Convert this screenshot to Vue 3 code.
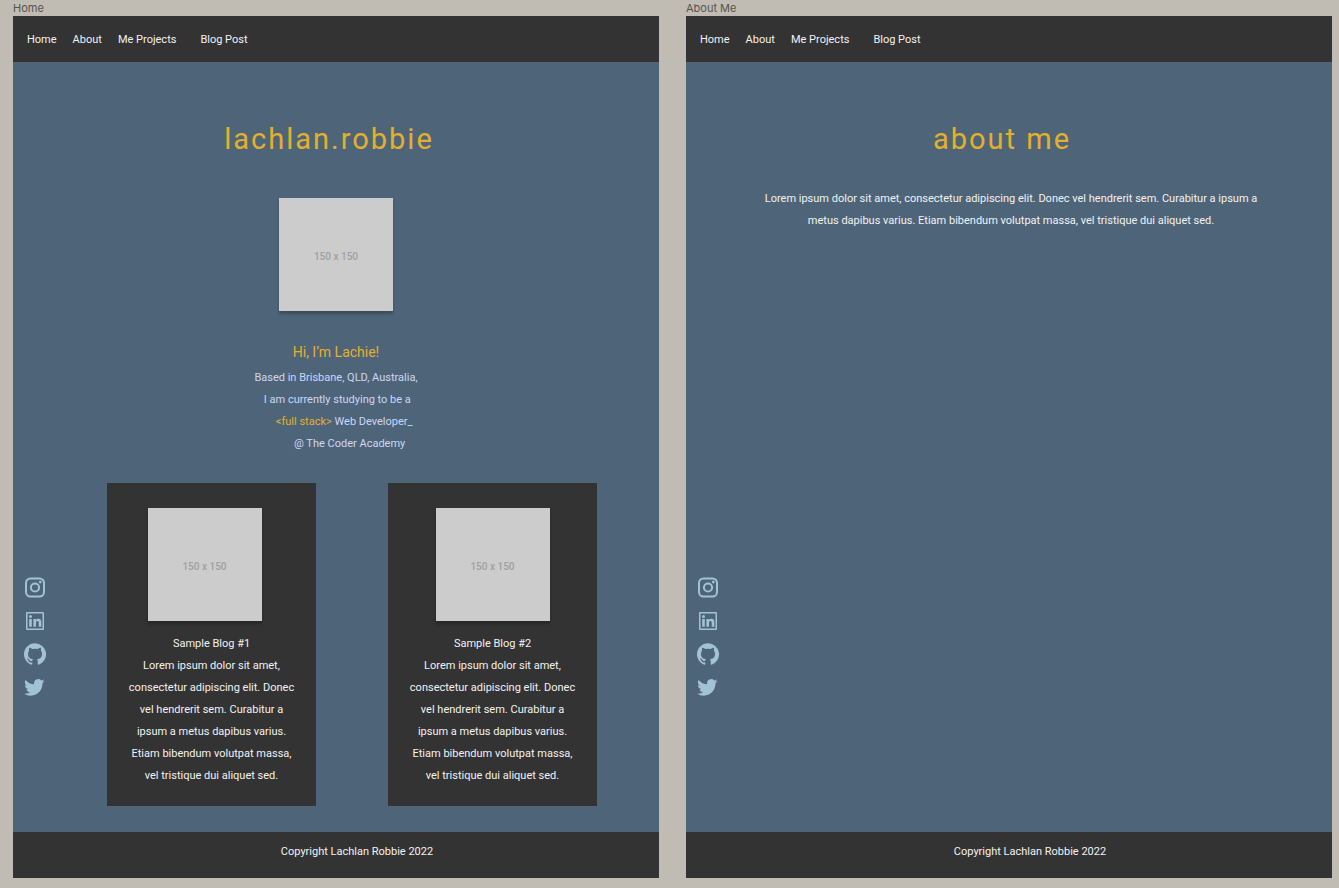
<script setup>
const navLinks = ['Home', 'About', 'Me Projects', 'Blog Post']

const lorem =
  'Lorem ipsum dolor sit amet, consectetur adipiscing elit. Donec vel hendrerit sem. Curabitur a ipsum a metus dapibus varius. Etiam bibendum volutpat massa, vel tristique dui aliquet sed.'

const boards = [
  { id: 'home', label: 'Home', title: 'lachlan.robbie' },
  { id: 'about', label: 'About Me', title: 'about me' },
]

const posts = [
  { title: 'Sample Blog #1', shifted: true },
  { title: 'Sample Blog #2', shifted: false },
]

const socials = [
  {
    name: 'Instagram',
    path: 'M7.500 1.500h9A5.500 5.500 0 0 1 22 7v9a5.500 5.500 0 0 1-5.500 5.500h-9A5.500 5.500 0 0 1 2 16v-9A5.500 5.500 0 0 1 7.500 1.500zm0 2a3.500 3.500 0 0 0-3.500 3.500v9a3.500 3.500 0 0 0 3.500 3.500h9a3.500 3.500 0 0 0 3.500-3.500v-9a3.500 3.500 0 0 0-3.500-3.500zM12 6.400a5.100 5.100 0 1 1 0 10.200a5.100 5.100 0 0 1 0-10.200zm0 2a3.100 3.100 0 1 0 0 6.200a3.100 3.100 0 0 0 0-6.200zM17.300 4.700a1.400 1.400 0 1 1 0 2.800a1.400 1.400 0 0 1 0-2.800z',
  },
  {
    name: 'LinkedIn',
    path: 'M4 3h16a1 1 0 0 1 1 1v16a1 1 0 0 1-1 1H4a1 1 0 0 1-1-1V4a1 1 0 0 1 1-1zm.500 1.500v15h15v-15zM6.200 10h2.600v7.800H6.200zM7.500 5.900a1.500 1.500 0 1 1 0 3a1.500 1.500 0 0 1 0-3zM10.400 10h2.500v1.100c.500-.800 1.400-1.300 2.500-1.300c2.200 0 2.900 1.400 2.900 3.600v4.400h-2.600v-4c0-1-.200-1.800-1.300-1.800s-1.400.800-1.400 1.800v4h-2.600z',
  },
  {
    name: 'GitHub',
    path: 'M12 1.300C5.920 1.300 1 6.220 1 12.300c0 4.870 3.150 8.980 7.520 10.440c.550.100.750-.240.750-.530v-1.860c-3.060.670-3.710-1.470-3.710-1.470c-.500-1.270-1.220-1.610-1.220-1.610c-1-.680.080-.670.080-.670c1.100.080 1.690 1.140 1.690 1.140c.980 1.680 2.570 1.190 3.200.910c.100-.710.380-1.190.700-1.470c-2.440-.280-5.010-1.220-5.010-5.440c0-1.200.430-2.180 1.130-2.950c-.110-.280-.490-1.400.110-2.910c0 0 .920-.290 3.020 1.130a10.500 10.500 0 0 1 5.500 0c2.100-1.420 3.020-1.130 3.020-1.130c.600 1.510.220 2.630.110 2.910c.700.770 1.130 1.750 1.130 2.950c0 4.230-2.570 5.160-5.020 5.430c.390.340.740 1.010.740 2.040v3.020c0 .290.200.640.750.530A11 11 0 0 0 12 1.300z',
  },
  {
    name: 'Twitter',
    path: 'M21.540 6.100c-.750.330-1.550.560-2.400.660a4.180 4.180 0 0 0 1.840-2.310c-.810.480-1.700.820-2.650 1.010a4.170 4.170 0 0 0-7.110 3.800A11.850 11.850 0 0 1 2.600 4.900a4.170 4.170 0 0 0 1.300 5.570a4.140 4.140 0 0 1-1.900-.520v.050a4.180 4.180 0 0 0 3.350 4.100a4.200 4.200 0 0 1-1.890.070a4.180 4.180 0 0 0 3.900 2.900A8.380 8.380 0 0 1 1.200 18.800a11.820 11.820 0 0 0 6.400 1.870c7.680 0 11.880-6.360 11.880-11.870l-.010-.540c.820-.590 1.520-1.320 2.070-2.160z',
  },
]
</script>

<template>
  <div class="canvas">
    <section v-for="board in boards" :key="board.id" class="frame">
      <div class="frame-label">{{ board.label }}</div>
      <div class="board">
        <header class="bar">
          <nav class="nav">
            <a v-for="link in navLinks" :key="link" href="#">{{ link }}</a>
          </nav>
        </header>

        <main class="body">
          <div v-if="board.id === 'home'" class="hero">
            <h1 class="title">{{ board.title }}</h1>
            <div class="thumb">150 x 150</div>
            <h2 class="greeting">Hi, I’m Lachie!</h2>
            <p class="intro">
              Based in Brisbane, QLD, Australia,<br />
              &nbsp;I am currently studying to be a<br />
              &nbsp;&nbsp;&nbsp;&nbsp;&nbsp;&nbsp;<span class="accent">&lt;full stack&gt;</span> Web Developer_<br />
              &nbsp;&nbsp;&nbsp;&nbsp;&nbsp;&nbsp;&nbsp;&nbsp;&nbsp;&nbsp;@ The Coder Academy
            </p>
          </div>
          <div v-else class="hero">
            <h1 class="title">{{ board.title }}</h1>
            <p class="bio">{{ lorem }}</p>
          </div>

          <aside class="socials">
            <a v-for="s in socials" :key="s.name" href="#" :aria-label="s.name">
              <svg viewBox="0 0 24 24" width="24" height="24" aria-hidden="true">
                <path :d="s.path" fill="currentColor" fill-rule="evenodd" />
              </svg>
            </a>
          </aside>

          <div v-if="board.id === 'home'" class="posts">
            <article v-for="post in posts" :key="post.title" class="card">
              <div class="thumb" :class="{ shifted: post.shifted }">150 x 150</div>
              <div class="card-text">
                <h3>{{ post.title }}</h3>
                <p>{{ lorem }}</p>
              </div>
            </article>
          </div>
        </main>

        <footer class="bar footer">Copyright Lachlan Robbie 2022</footer>
      </div>
    </section>
  </div>
</template>

<style>
body {
  background: #c0bcb3;
}
</style>

<style scoped>
.canvas {
  box-sizing: border-box;
  min-height: 100vh;
  padding: 0 7px 10px 13px;
  display: grid;
  grid-template-columns: 1fr 1fr;
  gap: 27px;
  background: #c0bcb3;
  font-family: Roboto, 'Noto Sans', sans-serif;
  font-size: 11px;
  line-height: 22px;
  color: #f2f2f2;
}

h1,
h2,
h3,
p {
  margin: 0;
  font-weight: 400;
}

a {
  color: inherit;
  text-decoration: none;
}

.frame {
  display: flex;
  flex-direction: column;
}

.frame-label {
  height: 16px;
  font: 11px/16px Inter, sans-serif;
  color: #55544f;
}

.board {
  flex: 1;
  display: flex;
  flex-direction: column;
  background: #4e6579;
}

.bar {
  box-sizing: border-box;
  height: 46px;
  background: #333333;
  display: flex;
  align-items: center;
}

.nav {
  display: flex;
  gap: 16px;
  padding: 2px 0 0 14px;
}

.nav a:last-child {
  margin-left: 8px;
}

.footer {
  justify-content: center;
  padding: 0 0 6px 42px;
}

.body {
  flex: 1;
  display: grid;
  grid-template-columns: 34px 1fr;
  grid-template-rows: auto 1fr;
}

.hero {
  grid-column: 1 / 3;
  display: flex;
  flex-direction: column;
  align-items: center;
  text-align: center;
}

.title {
  padding: 57px 14px 0 0;
  font-size: 29px;
  line-height: 40px;
  letter-spacing: 2px;
  color: #e4af2c;
}

.hero .thumb {
  margin-top: 39px;
}

.thumb {
  width: 114px;
  height: 113px;
  background: #cccccc;
  box-shadow: 0 3px 3px rgba(0, 0, 0, 0.25);
  font: 500 10px/118px Roboto, sans-serif;
  text-align: center;
  color: #a0a0a0;
}

.greeting {
  margin-top: 30px;
  font-size: 14px;
  color: #e4af2c;
}

.intro {
  margin-top: 4px;
  color: #ccd6f6;
}

.accent {
  color: #e4af2c;
}

.bio {
  max-width: 515px;
  margin-top: 29px;
  padding-left: 4px;
}

.socials {
  align-self: end;
  display: flex;
  flex-direction: column;
  gap: 9px;
  padding: 0 0 133px 10px;
  color: #a1c3d5;
}

.socials a,
.socials svg {
  display: block;
}

.posts {
  display: flex;
  justify-content: center;
  align-items: flex-start;
  gap: 72px;
  padding: 28px 2px 26px 0;
}

.card {
  box-sizing: border-box;
  width: 209px;
  padding: 25px 18px 19px;
  display: flex;
  flex-direction: column;
  align-items: center;
  gap: 12px;
  background: #333333;
  text-align: center;
}

.card h3 {
  font-size: 11px;
}

.shifted {
  margin-right: 14px;
}
</style>
